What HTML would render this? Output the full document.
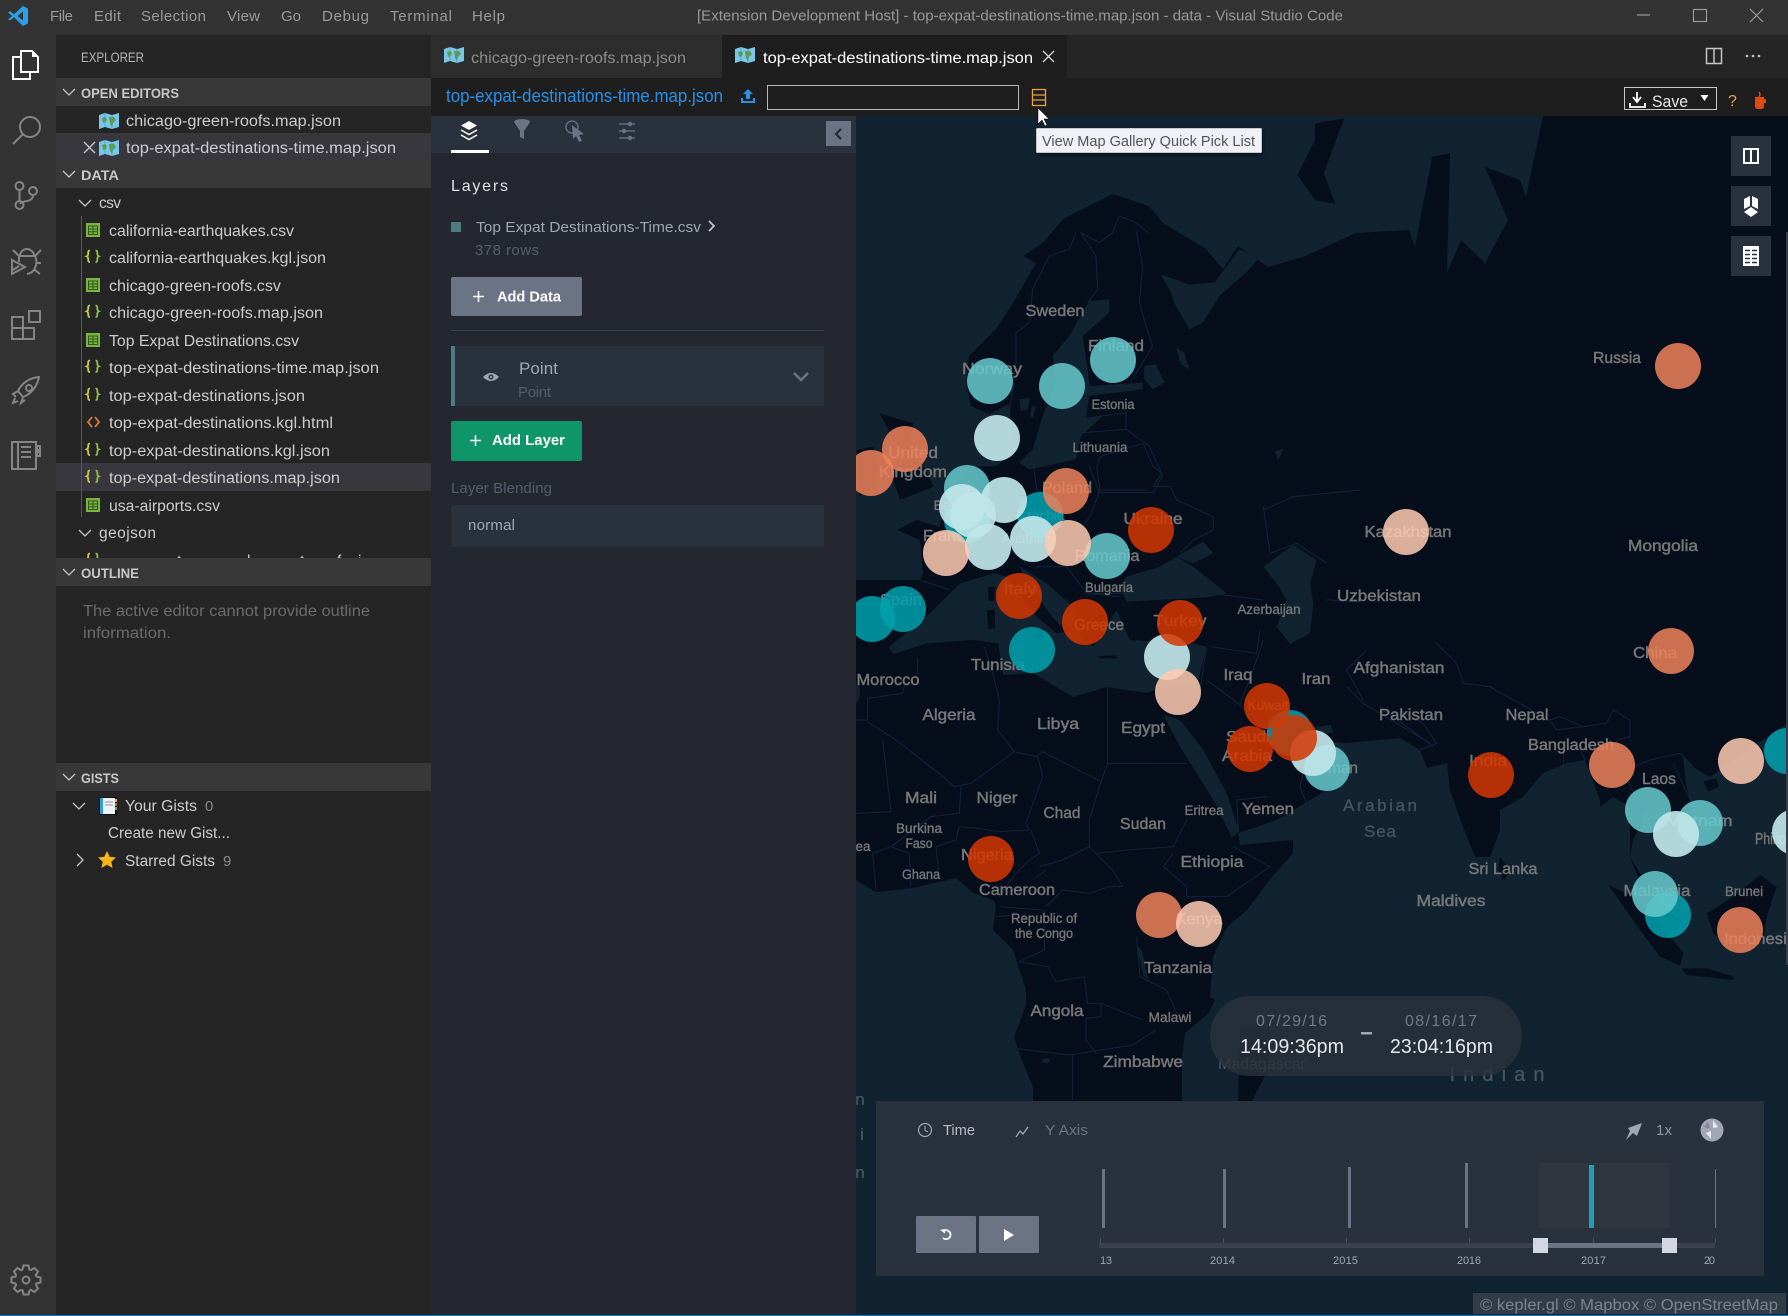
<!DOCTYPE html>
<html lang="en"><head><meta charset="utf-8"><title>top-expat-destinations-time.map.json - data - Visual Studio Code</title>
<style>
html,body{margin:0;padding:0;background:#252526;width:1788px;height:1316px;overflow:hidden}
svg{display:block}
text{font-family:"Liberation Sans",sans-serif;white-space:pre}
.r{font-size:15.5px;fill:#cccccc}
.h{font-size:14px;font-weight:700;fill:#c8c8c8}
.m{font-size:15px;fill:#9b9b9b}
.l{font-size:16px;fill:#777;text-anchor:middle;stroke:#777;stroke-width:.45}
.s{font-size:13.5px;fill:#777;text-anchor:middle;stroke:#777;stroke-width:.35}
.w{font-size:17px;fill:#47555f;text-anchor:middle;stroke:#47555f;stroke-width:.3}
.t{font-size:11px;fill:#a0a7b4}
.land{fill:#060e1c}.sea{fill:#112230}
.bd{fill:none;stroke:#13233c;stroke-width:3}
.ic{fill:none;stroke:#858585;stroke-width:2}
</style></head><body>
<svg width="1788" height="1316" viewBox="0 0 1788 1316" xmlns="http://www.w3.org/2000/svg">
<defs>
<clipPath id="mapc"><rect x="856" y="116" width="932" height="1200"/></clipPath>
<filter id="sh" x="-5%" y="-20%" width="110%" height="150%"><feDropShadow dx="1" dy="2" stdDeviation="1.500" flood-color="#000" flood-opacity=".5"/></filter>
<g id="mapi"><path d="M0 2l6-2 7 2 7-2v14l-7 2-7-2-6 2z" fill="#79c6e8"/><path d="M3 5l3-1 2 2-1 3-3 1zM10 4l5 0 2 3-3 3-1 4-2-3z" fill="#5b9e4b"/><path d="M6 0v14M13 2v14" stroke="#4d8fb3" stroke-width=".6"/></g>
<g id="csv"><rect width="14" height="14" fill="#7cb342"/><path d="M2.500 3h9v8.500h-9zM2.500 6h9M2.500 8.700h9M7 3v8.500" fill="none" stroke="#2c5a1a" stroke-width="1"/></g>
<g id="js"><path d="M4 1.500C2 1.500 2.200 3 2.200 4.500S2 6.800.7 7.300C2 7.800 2.200 8.500 2.200 10S2 13 4 13" fill="none" stroke="#cbcb41" stroke-width="1.800"/><path d="M9.500 1.500C11.500 1.500 11.300 3 11.300 4.500S11.500 6.800 12.800 7.300C11.500 7.800 11.300 8.500 11.300 10S11.500 13 9.500 13" fill="none" stroke="#8dc149" stroke-width="1.800"/></g>
<path id="chev" d="M-6-3L0 3 6-3" fill="none" stroke="#c5c5c5" stroke-width="1.300"/>
<path id="tooth" d="M22.500 1269.700L23.500 1265.500H28.500L29.500 1269.700L30.800 1270.240" fill="none" stroke="#858585" stroke-width="2"/>
</defs>

<!-- MAP -->
<g clip-path="url(#mapc)">
<rect x="856" y="116" width="932" height="1200" class="sea"/>
<!-- Eurasia + Africa -->
<polygon class="land" points="1113,194 1149,206 1163,223 1206,249 1223,269 1238,246 1268,267 1303,257 1356,233 1409,230 1415,247 1432,157 1450,153 1447,273 1461,240 1485,263 1508,220 1485,167 1520,180 1526,197 1543,116 1788,116 1788,723 1740,755 1710,777 1693,767 1683,757 1686,785 1693,813 1687,830 1670,840 1653,833 1647,810 1640,827 1633,840 1630,857 1640,873 1660,900 1677,920 1664,915 1640,880 1630,858 1630,807 1613,797 1600,807 1600,800 1585,760 1567,763 1543,773 1523,797 1500,810 1500,830 1490,857 1475,857 1463,827 1450,790 1447,763 1427,768 1420,750 1400,738 1346,743 1333,742 1300,725 1320,762 1353,763 1327,790 1305,803 1283,817 1257,827 1238,833 1240,845 1293,840 1293,853 1267,883 1247,910 1227,927 1213,957 1210,997 1215,1000 1209,1013 1185,1033 1182,1057 1182,1105 1033,1105 1033,1087 1023,1063 1014,1037 1026,1005 1026,990 1013,950 993,930 996,905 993,900 973,893 956,878 913,888 876,892 856,880 856,580 860,580 920,580 923,573 920,540 897,530 917,520 940,527 943,500 970,467 996,466 1019,449 1009,426 1011,403 989,414 971,406 966,383 969,356 996,329 1013,303 1036,263 1023,256 1043,243 1063,219 1089,206"/>
<!-- crop1 frame: Scandinavia -->
<g transform="translate(856,116) scale(.33333)">
<polygon class="sea" points="760,550 700,555 640,660 590,720 600,800 560,900 530,1000 490,1040 520,1060 660,1030 675,960 740,900 690,905 700,840 860,820 860,800 700,810 695,760 680,660 760,590"/>
<polygon class="sea" points="915,475 1000,505 1075,500 1150,400 1210,425 1170,470 1090,540 1040,620 1000,640 960,570 940,520"/>
<polygon class="sea" points="865,750 900,745 925,800 890,820 865,790"/>
<polygon class="sea" points="960,695 985,710 1000,760 975,745"/>
<polygon class="sea" points="490,850 522,845 515,880 495,885"/><polygon class="sea" points="528,870 540,872 530,905 522,900"/>
<path class="bd" d="M660 350L640 400 580 420 530 520 520 620 480 650 480 740 465 860M675 350L720 420 725 520 695 560M675 350L730 380 770 350 790 300 840 320 875 350M840 340L860 450 850 560 870 630 890 690 830 790M700 905L810 890 810 940 880 990 920 1080 890 1130 730 1130 700 1050M680 950L810 940"/>
</g>
<!-- zoom6 frame seas -->
<g transform="translate(860,300) scale(.33333)">
<polygon class="land" points="60,340 160,370 145,440 190,500 222,560 120,600 100,540 130,480"/>
<polygon class="land" points="-10,450 40,440 60,540 0,590"/>
<polygon class="sea" points="85,1042 200,950 270,880 300,850 400,820 440,830 530,950 590,1000 620,995 585,960 500,850 480,800 560,850 640,920 660,1010 700,1040 770,930 810,1020 1000,1030 1040,1040 1010,1160 909,1161 861,1179 741,1161 639,1191 519,1119 430,1125 415,1030 340,1020 200,1030 100,1062"/>
<polygon class="land" points="385,860 405,860 402,905 385,900"/><polygon class="land" points="380,930 405,930 405,985 385,985"/><polygon class="land" points="495,985 555,985 545,1025 510,1005"/><polygon class="land" points="715,1068 770,1066 770,1075 720,1076"/>
<polygon class="sea" points="800,830 900,800 950,770 1000,800 1050,840 1100,880 1040,892 800,905 780,860"/>
<polygon class="sea" points="950,770 1030,725 1060,760 1000,790"/>
<polygon class="sea" points="1210,800 1300,735 1370,780 1350,850 1360,910 1350,1000 1290,1032 1250,980 1280,900 1250,850"/>
<polygon class="sea" points="1245,455 1272,445 1255,480"/>
<path class="bd" d="M720 470L850 430 880 500 905 520 880 560 930 560 950 600 1060 650 1060 690 1000 720 960 760M720 570L860 570M720 470L710 500 720 570 690 650 640 720M520 490L530 570 650 620M480 600L530 575M180 840L270 870M350 680L420 720 500 790M530 800L620 800 680 880 780 890M800 880L680 880M1210 620L1230 760 1310 730 1400 790M1500 570L1300 590 1210 630M1400 900L1500 905M1050 880L1130 890 1210 900M1050 1040L1190 1060 1200 990M1040 1040L1020 1170"/>
</g>
<!-- crop2 frame: West Africa -->
<g transform="translate(856,640) scale(.33333)">
<polygon class="sea" points="-5,130 12,140 10,175 -5,200"/>
<ellipse cx="570" cy="1262" rx="12" ry="7" class="sea"/>
<path class="bd" d="M35 245L120 300 255 405 295 440 345 430 475 335 540 350 560 335 735 425M735 425L755 370 900 370M755 370L755 135M475 335L425 270 430 180 410 100 385 20M35 245L35 175 140 160 145 140 185 100 185 55M0 240L35 240M80 300L105 515 0 520M315 440L310 520 225 530 105 620 50 640 60 750M510 550L560 410 545 350M510 550L520 570 430 575 370 565 310 560 300 600 240 620 250 715M105 620L160 640 165 740M525 570L550 640 520 660 480 700 430 770M700 620L700 540 735 425M550 680L620 660 700 620 770 690 800 740 760 740 700 760 620 750 570 800M530 720L570 690M430 800L560 810M420 830L480 825M490 965L575 980 600 1025 685 1010 695 1090 735 1090 860 1140M690 1135L735 1130 735 1090M690 1135L690 1200 720 1240M475 1225L640 1245 830 1215 900 1170M650 1245L650 1380M565 810L565 930 490 965"/>
</g>
<!-- zoom7 -->
<g transform="translate(1000,640) scale(.33333)">
<polygon class="sea" points="490,225 540,240 610,330 680,460 718,575 695,592 640,480 590,400 540,320"/>
<polygon class="sea" points="780,170 870,230 940,262 992,255 1000,278 940,282 860,292 805,262"/>
<polygon class="sea" points="410,920 425,930 445,1020 430,1005"/>
<path class="bd" d="M322 370L560 370M520 640L490 680 560 740 560 770 680 770 810 680 700 620M560 540L520 620 380 630 290 640M410 890L420 1010 500 1050 530 1120M620 120L720 195 800 270M720 195L770 60 790 0M940 280L900 440 920 490M800 470L710 480 715 570M1090 180L1040 90 1100 30M1140 200L1300 320M1040 140L1090 190 1290 310"/>
</g>
<!-- zoom8 -->
<g transform="translate(1400,640) scale(.33333)">
<polygon class="land" points="625,735 700,770 780,850 850,940 840,978 780,950 720,870"/>
<polygon class="land" points="920,820 1000,770 1080,705 1130,740 1100,830 1090,900 1000,935 940,880"/>
<polygon class="land" points="845,985 920,985 1000,1010 1000,1020 860,1005"/>
<polygon class="land" points="300,650 330,690 312,722 295,690"/>
<polygon class="land" points="910,425 950,415 955,440 925,455"/>
<path class="bd" d="M110 10L170 70 190 130 270 140 330 175 450 240 480 230 550 260 620 250 640 210 690 240 690 290 650 300 660 370 700 380 750 360 840 340 880 380M0 210L70 250 110 310 60 330M450 240L470 270 550 260M490 320L490 380M540 330L555 360M660 370L720 500M820 370L870 480 900 500"/>
</g>
<!-- Arctic islands -->
<g transform="translate(870,0) scale(.5855,.33333)">
<polygon class="land" points="760,370 810,355 775,520 795,612 760,600 730,525 760,420"/>
<polygon class="sea" points="690,690 705,690 708,720 692,730"/>
</g>
<polygon class="land" points="1240,1027 1272,1030 1268,1070 1250,1105 1238,1105"/>

<!-- labels -->
<g>
<text class="l" x="1055" y="316" textLength="59" lengthAdjust="spacingAndGlyphs">Sweden</text>
<text class="l" x="1116" y="351" textLength="56" lengthAdjust="spacingAndGlyphs">Finland</text>
<text class="l" x="992" y="374" textLength="60" lengthAdjust="spacingAndGlyphs">Norway</text>
<text class="s" x="1113" y="409" textLength="43" lengthAdjust="spacingAndGlyphs">Estonia</text>
<text class="s" x="1100" y="452" textLength="55" lengthAdjust="spacingAndGlyphs">Lithuania</text>
<text class="l" x="913" y="458" textLength="50" lengthAdjust="spacingAndGlyphs">United</text>
<text class="l" x="913" y="477" textLength="68" lengthAdjust="spacingAndGlyphs">Kingdom</text>
<text class="l" x="1067" y="493" textLength="50" lengthAdjust="spacingAndGlyphs">Poland</text>
<text class="s" x="958" y="510">Belgium</text>
<text class="l" x="1153" y="524" textLength="59" lengthAdjust="spacingAndGlyphs">Ukraine</text>
<text class="s" x="1040" y="520">Czechia</text>
<text class="s" x="1023" y="543">Austria</text>
<text class="l" x="948" y="541" textLength="50" lengthAdjust="spacingAndGlyphs">France</text>
<text class="l" x="1107" y="561" textLength="65" lengthAdjust="spacingAndGlyphs">Romania</text>
<text class="s" x="1109" y="592" textLength="48" lengthAdjust="spacingAndGlyphs">Bulgaria</text>
<text class="l" x="1020" y="594" textLength="33" lengthAdjust="spacingAndGlyphs">Italy</text>
<text class="l" x="901" y="605" textLength="42" lengthAdjust="spacingAndGlyphs">Spain</text>
<text class="l" x="1099" y="630" textLength="50" lengthAdjust="spacingAndGlyphs">Greece</text>
<text class="l" x="1180" y="626" textLength="53" lengthAdjust="spacingAndGlyphs">Turkey</text>
<text class="s" x="1269" y="614" textLength="63" lengthAdjust="spacingAndGlyphs">Azerbaijan</text>
<text class="l" x="1379" y="601" textLength="84" lengthAdjust="spacingAndGlyphs">Uzbekistan</text>
<text class="l" x="1408" y="537" textLength="87" lengthAdjust="spacingAndGlyphs">Kazakhstan</text>
<text class="l" x="1617" y="363" textLength="48" lengthAdjust="spacingAndGlyphs">Russia</text>
<text class="l" x="1663" y="551" textLength="70" lengthAdjust="spacingAndGlyphs">Mongolia</text>
<text class="l" x="1655" y="658" textLength="44" lengthAdjust="spacingAndGlyphs">China</text>
<text class="l" x="998" y="670" textLength="54" lengthAdjust="spacingAndGlyphs">Tunisia</text>
<text class="l" x="888" y="685" textLength="63" lengthAdjust="spacingAndGlyphs">Morocco</text>
<text class="l" x="1238" y="680" textLength="29" lengthAdjust="spacingAndGlyphs">Iraq</text>
<text class="l" x="1316" y="684" textLength="29" lengthAdjust="spacingAndGlyphs">Iran</text>
<text class="l" x="1399" y="673" textLength="91" lengthAdjust="spacingAndGlyphs">Afghanistan</text>
<text class="l" x="1411" y="720" textLength="64" lengthAdjust="spacingAndGlyphs">Pakistan</text>
<text class="l" x="1527" y="720" textLength="43" lengthAdjust="spacingAndGlyphs">Nepal</text>
<text class="l" x="1571" y="750" textLength="86" lengthAdjust="spacingAndGlyphs">Bangladesh</text>
<text class="l" x="1659" y="784" textLength="34" lengthAdjust="spacingAndGlyphs">Laos</text>
<text class="l" x="1700" y="826" textLength="65" lengthAdjust="spacingAndGlyphs">Vietnam</text>
<text class="l" x="1785" y="844" textLength="60" lengthAdjust="spacingAndGlyphs">Philippines</text>
<text class="l" x="1657" y="896" textLength="67" lengthAdjust="spacingAndGlyphs">Malaysia</text>
<text class="s" x="1744" y="896" textLength="38" lengthAdjust="spacingAndGlyphs">Brunei</text>
<text class="l" x="1760" y="944" textLength="72" lengthAdjust="spacingAndGlyphs">Indonesia</text>
<text class="l" x="1503" y="874" textLength="69" lengthAdjust="spacingAndGlyphs">Sri Lanka</text>
<text class="l" x="1451" y="906" textLength="69" lengthAdjust="spacingAndGlyphs">Maldives</text>
<text class="l" x="1488" y="766" textLength="38" lengthAdjust="spacingAndGlyphs">India</text>
<text class="l" x="1058" y="729" textLength="42" lengthAdjust="spacingAndGlyphs">Libya</text>
<text class="l" x="1143" y="733" textLength="44" lengthAdjust="spacingAndGlyphs">Egypt</text>
<text class="l" x="949" y="720" textLength="53" lengthAdjust="spacingAndGlyphs">Algeria</text>
<text class="l" x="1248" y="742" textLength="44" lengthAdjust="spacingAndGlyphs">Saudi</text>
<text class="l" x="1247" y="761" textLength="50" lengthAdjust="spacingAndGlyphs">Arabia</text>
<text class="s" x="1268" y="710" textLength="41" lengthAdjust="spacingAndGlyphs">Kuwait</text>
<text class="l" x="1337" y="773" textLength="42" lengthAdjust="spacingAndGlyphs">Oman</text>
<text class="l" x="1268" y="814" textLength="52" lengthAdjust="spacingAndGlyphs">Yemen</text>
<text class="s" x="1204" y="815" textLength="39" lengthAdjust="spacingAndGlyphs">Eritrea</text>
<text class="l" x="1143" y="829" textLength="46" lengthAdjust="spacingAndGlyphs">Sudan</text>
<text class="l" x="1062" y="818" textLength="37" lengthAdjust="spacingAndGlyphs">Chad</text>
<text class="l" x="997" y="803" textLength="41" lengthAdjust="spacingAndGlyphs">Niger</text>
<text class="l" x="921" y="803" textLength="32" lengthAdjust="spacingAndGlyphs">Mali</text>
<text class="s" x="919" y="833" textLength="46" lengthAdjust="spacingAndGlyphs">Burkina</text>
<text class="s" x="919" y="848" textLength="27" lengthAdjust="spacingAndGlyphs">Faso</text>
<text class="s" x="921" y="879" textLength="38" lengthAdjust="spacingAndGlyphs">Ghana</text>
<text class="s" x="863" y="851">ea</text>
<text class="l" x="987" y="860" textLength="52" lengthAdjust="spacingAndGlyphs">Nigeria</text>
<text class="l" x="1017" y="895" textLength="76" lengthAdjust="spacingAndGlyphs">Cameroon</text>
<text class="s" x="1044" y="923" textLength="66" lengthAdjust="spacingAndGlyphs">Republic of</text>
<text class="s" x="1044" y="938" textLength="58" lengthAdjust="spacingAndGlyphs">the Congo</text>
<text class="l" x="1212" y="867" textLength="63" lengthAdjust="spacingAndGlyphs">Ethiopia</text>
<text class="l" x="1199" y="924" textLength="47" lengthAdjust="spacingAndGlyphs">Kenya</text>
<text class="l" x="1178" y="973" textLength="68" lengthAdjust="spacingAndGlyphs">Tanzania</text>
<text class="l" x="1057" y="1016" textLength="53" lengthAdjust="spacingAndGlyphs">Angola</text>
<text class="s" x="1170" y="1022" textLength="43" lengthAdjust="spacingAndGlyphs">Malawi</text>
<text class="l" x="1143" y="1067" textLength="80" lengthAdjust="spacingAndGlyphs">Zimbabwe</text>
<text class="l" x="1262" y="1069" textLength="88" lengthAdjust="spacingAndGlyphs" style="fill:#53585c;stroke:none">Madagascar</text>
<text class="w" x="1380" y="811" textLength="74">Arabian</text>
<text class="w" x="1380" y="837" textLength="32">Sea</text>
<text class="w" x="1497" y="1081" textLength="95" style="font-size:20px">Indian</text>
<text class="w" x="860" y="1105">n</text><text class="w" x="862" y="1140">i</text><text class="w" x="860" y="1178">n</text>
</g>

<!-- circles -->
<g fill-opacity=".85">
<g fill="#00a1ae">
<circle cx="1040" cy="515" r="23"/><circle cx="967" cy="520" r="23"/><circle cx="903" cy="609" r="23"/><circle cx="872" cy="619" r="23"/><circle cx="1032" cy="650" r="23"/><circle cx="1290" cy="733" r="23"/><circle cx="1787" cy="751" r="23"/><circle cx="1668" cy="915" r="23"/>
</g>
<g fill="#66cace">
<circle cx="990" cy="381" r="23"/><circle cx="1062" cy="386" r="23"/><circle cx="1113" cy="360" r="23"/><circle cx="1107" cy="556" r="23"/><circle cx="967" cy="488" r="23"/><circle cx="1327" cy="768" r="23"/><circle cx="1648" cy="810" r="23"/><circle cx="1700" cy="823" r="23"/><circle cx="1655" cy="894" r="23"/>
</g>
<g fill="#bfe5e8" fill-opacity=".92">
<circle cx="997" cy="438" r="23"/><circle cx="973" cy="515" r="23"/><circle cx="962" cy="507" r="23"/><circle cx="1004" cy="500" r="23"/><circle cx="988" cy="547" r="23"/><circle cx="1033" cy="539" r="23"/><circle cx="1167" cy="657" r="23"/><circle cx="1313" cy="753" r="23"/><circle cx="1676" cy="834" r="23"/><circle cx="1795" cy="832" r="23"/>
</g>
<g fill="#ee815b">
<circle cx="905" cy="449" r="23"/><circle cx="871" cy="473" r="23"/><circle cx="1066" cy="491" r="23"/><circle cx="1159" cy="915" r="23"/><circle cx="1612" cy="765" r="23"/><circle cx="1671" cy="651" r="23"/><circle cx="1740" cy="930" r="23"/><circle cx="1678" cy="366" r="23"/>
</g>
<g fill="#ffcab1">
<circle cx="946" cy="553" r="23"/><circle cx="1068" cy="543" r="23"/><circle cx="1178" cy="692" r="23"/><circle cx="1199" cy="924" r="23"/><circle cx="1741" cy="761" r="23"/><circle cx="1406" cy="532" r="23"/>
</g>
<g fill="#d53601">
<circle cx="1151" cy="530" r="23"/><circle cx="1019" cy="596" r="23"/><circle cx="1085" cy="622" r="23"/><circle cx="1180" cy="623" r="23"/><circle cx="1267" cy="706" r="23"/><circle cx="1250" cy="749" r="23"/><circle cx="1294" cy="738" r="23"/><circle cx="1491" cy="775" r="23"/><circle cx="991" cy="859" r="23"/>
</g>
</g>

<!-- map buttons -->
<g fill="#29323c"><rect x="1731" y="136" width="40" height="40"/><rect x="1731" y="186" width="40" height="40"/><rect x="1731" y="236" width="40" height="40"/></g>
<path d="M1744 149h14v14h-14zM1751 149v14" fill="none" stroke="#fff" stroke-width="2"/>
<path d="M1744 199l6-3v10l-6 3zM1758 199l-6-3v10l6 3zM1751 207l7 5-7 5-7-5z" fill="#fff"/>
<path d="M1743 246h16v20h-16z" fill="#fff"/><path d="M1745 250.500h5M1752 250.500h5M1745 254.500h5M1752 254.500h5M1745 258.500h5M1752 258.500h5M1745 262.500h5M1752 262.500h5" stroke="#29323c" stroke-width="1.500"/>

<!-- time tooltip -->
<rect x="1210" y="996" width="312" height="80" rx="40" fill="#29323c" fill-opacity=".82"/>
<text x="1256" y="1026" font-size="16" fill="#6e7a8a" textLength="71">07/29/16</text>
<text x="1405" y="1026" font-size="16" fill="#6e7a8a" textLength="72">08/16/17</text>
<text x="1240" y="1053" font-size="20" fill="#e4e7ec" textLength="104" lengthAdjust="spacingAndGlyphs">14:09:36pm</text>
<text x="1390" y="1053" font-size="20" fill="#e4e7ec" textLength="103" lengthAdjust="spacingAndGlyphs">23:04:16pm</text>
<rect x="1361" y="1032" width="11" height="2.500" fill="#a0a7b4"/>

<!-- time panel -->
<rect x="876" y="1101" width="888" height="175" fill="#29323c"/>
<circle cx="925" cy="1130" r="6.500" fill="none" stroke="#a0a7b4" stroke-width="1.200"/><path d="M925 1126v4.500l3 1.500" fill="none" stroke="#a0a7b4"/>
<text x="943" y="1135" font-size="15" fill="#b8bdc7" textLength="32" lengthAdjust="spacingAndGlyphs">Time</text>
<path d="M1016 1137l4-6 3 3 5-7" fill="none" stroke="#a0a7b4" stroke-width="1.300"/>
<text x="1045" y="1135" font-size="15" fill="#6a7485" textLength="43" lengthAdjust="spacingAndGlyphs">Y Axis</text>
<path d="M1642 1123l-5 13-4-3-7 7 4-9-2-3z" fill="#a0a7b4"/>
<text x="1656" y="1135" font-size="15" fill="#8d96a2" textLength="16">1x</text>
<circle cx="1712" cy="1130" r="11.500" fill="#a0a7b4"/><path d="M1713 1120l5 7-5 1zM1711 1131l-5 2 5 6z" fill="#e8eaee"/><path d="M1704 1127l6 2-2-7z" fill="#7f8794"/>
<rect x="1539" y="1163" width="131" height="65" fill="#2f3640"/>
<g fill="#6a7485"><rect x="1102" y="1169" width="3" height="59"/><rect x="1223" y="1169" width="3" height="59"/><rect x="1348" y="1167" width="3" height="61"/><rect x="1465" y="1163" width="3" height="65"/><rect x="1715" y="1169" width="1" height="59"/></g>
<rect x="1589" y="1165" width="5" height="63" fill="#1f9fb8"/>
<rect x="1099" y="1243" width="616" height="5" fill="#3a414c"/>
<g fill="#4a5260"><rect x="1100" y="1238" width="1" height="5"/><rect x="1223" y="1238" width="1" height="5"/><rect x="1346" y="1238" width="1" height="5"/><rect x="1469" y="1238" width="1" height="5"/><rect x="1593" y="1238" width="1" height="5"/><rect x="1715" y="1238" width="1" height="5"/></g>
<rect x="1540" y="1243" width="130" height="5" fill="#6a7485"/>
<rect x="1533" y="1238" width="15" height="15" fill="#d3d8e0"/><rect x="1662" y="1238" width="15" height="15" fill="#d3d8e0"/>
<text class="t" x="1100" y="1264" textLength="12">13</text><text class="t" x="1210" y="1264" textLength="25">2014</text><text class="t" x="1333" y="1264" textLength="25">2015</text><text class="t" x="1457" y="1264" textLength="24">2016</text><text class="t" x="1581" y="1264" textLength="25">2017</text><text class="t" x="1704" y="1264" textLength="11">20</text>
<rect x="916" y="1216" width="60" height="37" rx="1" fill="#6a7485"/><rect x="979" y="1216" width="60" height="37" rx="1" fill="#6a7485"/>
<path d="M943.500 1231a4.500 4.500 0 1 1-.5 7" fill="none" stroke="#fff" stroke-width="1.800"/><path d="M940 1230l5-1 0 4.500z" fill="#fff"/>
<path d="M1004 1229l10 6-10 6z" fill="#fff"/>
<!-- attribution -->
<rect x="1473" y="1293" width="313" height="21" fill="#323c46"/>
<text x="1480" y="1310" font-size="16" fill="#7a838e" textLength="298" lengthAdjust="spacingAndGlyphs">© kepler.gl © Mapbox © OpenStreetMap</text>
<rect x="1786" y="232" width="2" height="733" fill="#3a3e42"/>
</g>

<!-- KEPLER SIDE PANEL -->
<rect x="431" y="116" width="425" height="1200" fill="#242730"/>
<rect x="431" y="116" width="425" height="37" fill="#29323c"/>
<rect x="451" y="150" width="38" height="3" fill="#fff"/>
<path d="M469 121l8 4.500-8 4.500-8-4.500z" fill="#fff"/><path d="M461 130l8 4.500 8-4.500M461 135l8 4.500 8-4.500" fill="none" stroke="#fff" stroke-width="1.500"/>
<path d="M514 122a8 3 0 0 1 16 0l-6 9v8l-4-2v-6z" fill="#6a7485"/>
<circle cx="572" cy="127" r="6" fill="none" stroke="#6a7485" stroke-width="1.300"/><path d="M572 125l12 9-5 1 3 6-3 1-3-6-3 3z" fill="#6a7485"/>
<path d="M619 124h16M619 131h16M619 138h16" stroke="#6a7485" stroke-width="1.300"/><circle cx="630" cy="124" r="2.200" fill="#6a7485"/><circle cx="624" cy="131" r="2.200" fill="#6a7485"/><circle cx="630" cy="138" r="2.200" fill="#6a7485"/>
<rect x="826" y="121" width="25" height="25" fill="#6a7485"/><path d="M841 129l-5 5 5 5" fill="none" stroke="#242730" stroke-width="2"/>
<text x="451" y="191" font-size="16" fill="#dfe2e8" textLength="57">Layers</text>
<rect x="451" y="222" width="10" height="10" fill="#4f7a80"/>
<text x="476" y="232" font-size="15" fill="#a0a7b4" textLength="225" lengthAdjust="spacingAndGlyphs">Top Expat Destinations-Time.csv</text>
<path d="M709 221l5 5-5 5" fill="none" stroke="#c0c4cc" stroke-width="1.800"/>
<text x="475" y="255" font-size="15" fill="#565d6a" textLength="64">378 rows</text>
<rect x="451" y="277" width="131" height="39" rx="2" fill="#6a7485"/>
<path d="M473 296.500h11M478.500 291v11" stroke="#fff" stroke-width="1.500"/>
<text x="497" y="301.500" font-size="15" font-weight="700" fill="#fff" textLength="64" lengthAdjust="spacingAndGlyphs">Add Data</text>
<rect x="451" y="330" width="373" height="1" fill="#3a414c"/>
<rect x="451" y="346" width="373" height="60" fill="#29323c"/><rect x="451" y="346" width="4" height="60" fill="#4f7a80"/>
<path d="M483 377q8-8 16 0q-8 8-16 0z" fill="#a0a7b4"/><circle cx="491" cy="377" r="2.500" fill="#29323c"/><circle cx="491" cy="377" r="1.100" fill="#a0a7b4"/>
<text x="519" y="374" font-size="17" fill="#a0a7b4" textLength="39">Point</text>
<text x="518" y="397" font-size="15" fill="#565d6a" textLength="33">Point</text>
<path d="M794 373l7 7 7-7" fill="none" stroke="#6a7485" stroke-width="2.500"/>
<rect x="451" y="421" width="131" height="40" rx="2" fill="#0f9668"/>
<path d="M470 440.500h11M475.500 435v11" stroke="#fff" stroke-width="1.500"/>
<text x="492" y="445" font-size="15" font-weight="700" fill="#fff" textLength="73" lengthAdjust="spacingAndGlyphs">Add Layer</text>
<text x="451" y="493" font-size="15" fill="#565d6a" textLength="101">Layer Blending</text>
<rect x="451" y="505" width="373" height="42" rx="2" fill="#29323c"/>
<text x="468" y="530" font-size="15" fill="#a0a7b4" textLength="47">normal</text>

<!-- TITLE BAR / TABS / TOOLBAR -->
<rect x="431" y="35" width="1357" height="43" fill="#252526"/>
<rect x="431" y="78" width="1357" height="38" fill="#1e1e1e"/>
<rect x="431" y="35" width="291" height="43" fill="#2d2d2d"/>
<rect x="722" y="35" width="345" height="43" fill="#1e1e1e"/>
<use href="#mapi" x="444" y="47"/><use href="#mapi" x="735" y="47"/>
<text x="471" y="63" class="r" style="fill:#8c8c8c" textLength="215" lengthAdjust="spacingAndGlyphs">chicago-green-roofs.map.json</text>
<text x="763" y="63" class="r" style="fill:#fff" textLength="270" lengthAdjust="spacingAndGlyphs">top-expat-destinations-time.map.json</text>
<path d="M1043 51l11 11M1054 51l-11 11" stroke="#d8d8d8" stroke-width="1.300"/>
<path d="M1706.500 48.500h15v15h-15zM1714 48.500v15" fill="none" stroke="#c5c5c5" stroke-width="1.500"/>
<g fill="#c5c5c5"><circle cx="1747" cy="56" r="1.300"/><circle cx="1753" cy="56" r="1.300"/><circle cx="1759" cy="56" r="1.300"/></g>
<text x="446" y="102" font-size="18" fill="#2a8fe8" textLength="277" lengthAdjust="spacingAndGlyphs">top-expat-destinations-time.map.json</text>
<path d="M748 89l-5 5h3v5h4v-5h3zM741 98v5h14v-5h-2v3h-10v-3z" fill="#2a8fe8"/>
<rect x="767.500" y="85.500" width="251" height="24" fill="none" stroke="#b8b8b8"/>
<path d="M1032.500 89.500h13v16h-13zM1032.500 95h13M1032.500 100h13" fill="none" stroke="#e8a33d" stroke-width="1.300"/>
<rect x="1624.500" y="87.500" width="92" height="22" fill="none" stroke="#c8c8c8"/>
<path d="M1637 92v9M1633 97l4 5 4-5M1630 103v4h15v-4" fill="none" stroke="#fff" stroke-width="1.800"/>
<text x="1652" y="107" font-size="17" fill="#e8e8e8" textLength="36" lengthAdjust="spacingAndGlyphs">Save</text>
<path d="M1700.500 95h8l-4 6z" fill="#fff"/>
<text x="1728" y="106" font-size="16" fill="#e8a33d">?</text>
<path d="M1755 97h9v9q0 3-3 3h-3q-3 0-3-3zM1764 99h2v4h-2" fill="#e04a10"/><path d="M1759 92q2 2 0 5" fill="none" stroke="#e04a10" stroke-width="1.500"/>
<!-- tooltip -->
<rect x="1036.500" y="128.500" width="225" height="24" rx="1" fill="#f0f0f7" stroke="#c8c8c8" filter="url(#sh)"/>
<text x="1042" y="146" font-size="14.500" fill="#555" textLength="213" lengthAdjust="spacingAndGlyphs">View Map Gallery Quick Pick List</text>
<path d="M1038 108v16l4-4 3 6 2-1-3-6h5z" fill="#fff" stroke="#000" stroke-width=".5"/>

<rect x="0" y="0" width="1788" height="35" fill="#333333"/>
<path d="M23 6l5 2.500v15l-5 2.500-9-8.800-3.800 3L8 19.500l4-3.500-4-3.500 2.200-1.200 3.800 3zM23 11.500l-5.500 4.500 5.500 4.500z" fill="#2b9fe8" fill-rule="evenodd"/>
<text class="m" x="50" y="21" textLength="23">File</text><text class="m" x="94" y="21" textLength="27">Edit</text><text class="m" x="141" y="21" textLength="65">Selection</text><text class="m" x="227" y="21" textLength="33">View</text><text class="m" x="281" y="21" textLength="20">Go</text><text class="m" x="322" y="21" textLength="47">Debug</text><text class="m" x="390" y="21" textLength="62">Terminal</text><text class="m" x="472" y="21" textLength="33">Help</text>
<text x="697" y="20.500" font-size="14.500" fill="#999" textLength="646" lengthAdjust="spacingAndGlyphs">[Extension Development Host] - top-expat-destinations-time.map.json - data - Visual Studio Code</text>
<path d="M1637 15h13" stroke="#999" stroke-width="1.200"/><rect x="1693.500" y="9.500" width="13" height="12" fill="none" stroke="#999" stroke-width="1.200"/><path d="M1750 9l13 13M1763 9l-13 13" stroke="#999" stroke-width="1.200"/>

<!-- ACTIVITY BAR -->
<rect x="0" y="35" width="56" height="1281" fill="#333333"/>
<path d="M21 57H13V79H30V72" fill="none" stroke="#fff" stroke-width="2"/><path d="M21 51v21h17V57l-6-6z" fill="none" stroke="#fff" stroke-width="2"/><path d="M32 51v6h6z" fill="#fff"/>
<circle cx="30" cy="127" r="10" class="ic"/><path d="M23 134l-10 10" class="ic"/>
<circle cx="19.500" cy="186" r="4" class="ic"/><circle cx="19.500" cy="205" r="4" class="ic"/><circle cx="33" cy="191" r="4" class="ic"/><path d="M19.500 190v11M33 195q0 5-6 6t-7 3" class="ic"/>
<path d="M20 256a7 7 0 0 1 14 0M19 256h16q3 6 0 12-2 5-8 6M19 262v-6M13 250l6 6M41 250l-6 6M13 270l6-4M36 263h5M35 270l5 4" class="ic"/><path d="M12 260l13 7-13 7z" class="ic"/>
<path d="M12 317h11v11H12zM23 328h11v11H23zM12 328h11v11H12z" class="ic"/><rect x="29" y="311" width="11" height="11" class="ic"/>
<path d="M39 377c-10 1-17 6-21 14l5 6c8-3 14-10 16-20zM18 391l-5 3 3 3M23 397l-2 6 4-3M15 398l-2 5 5-2" class="ic"/><circle cx="29" cy="388" r="3" class="ic"/>
<rect x="12" y="442" width="24" height="27" class="ic"/><path d="M18 442v27M21 447h10M21 452h10M21 457h10" class="ic"/><path d="M37 446h3v4h-3zM37 452h3v4h-3z" class="ic"/>
<circle cx="26" cy="1280" r="3.500" class="ic"/>
<use href="#tooth"/><use href="#tooth" transform="rotate(45 26 1280)"/><use href="#tooth" transform="rotate(90 26 1280)"/><use href="#tooth" transform="rotate(135 26 1280)"/><use href="#tooth" transform="rotate(180 26 1280)"/><use href="#tooth" transform="rotate(225 26 1280)"/><use href="#tooth" transform="rotate(270 26 1280)"/><use href="#tooth" transform="rotate(315 26 1280)"/>

<!-- SIDEBAR -->
<rect x="56" y="35" width="375" height="1281" fill="#252526"/>
<text x="81" y="62" font-size="14" fill="#b4b4b4" textLength="63" lengthAdjust="spacingAndGlyphs">EXPLORER</text>
<rect x="56" y="133" width="375" height="27" fill="#37373d"/>
<rect x="56" y="463" width="375" height="28" fill="#37373d"/>
<rect x="81" y="216" width="1" height="301" fill="#585858"/>
<use href="#mapi" x="99" y="113"/><use href="#mapi" x="99" y="140"/>
<text class="r" x="126" y="126" textLength="215" lengthAdjust="spacingAndGlyphs">chicago-green-roofs.map.json</text>
<text class="r" x="126" y="153" textLength="270" lengthAdjust="spacingAndGlyphs">top-expat-destinations-time.map.json</text>
<path d="M84 142l11 11M95 142l-11 11" stroke="#c8c8c8" stroke-width="1.300"/>
<use href="#chev" x="85" y="203"/><text class="r" x="99" y="208" textLength="22">csv</text>
<use href="#csv" x="86" y="223"/><text class="r" x="109" y="236" textLength="185" lengthAdjust="spacingAndGlyphs">california-earthquakes.csv</text>
<use href="#js" x="86" y="249"/><text class="r" x="109" y="263" textLength="217" lengthAdjust="spacingAndGlyphs">california-earthquakes.kgl.json</text>
<use href="#csv" x="86" y="278"/><text class="r" x="109" y="291" textLength="172" lengthAdjust="spacingAndGlyphs">chicago-green-roofs.csv</text>
<use href="#js" x="86" y="304"/><text class="r" x="109" y="318" textLength="214" lengthAdjust="spacingAndGlyphs">chicago-green-roofs.map.json</text>
<use href="#csv" x="86" y="333"/><text class="r" x="109" y="346" textLength="190" lengthAdjust="spacingAndGlyphs">Top Expat Destinations.csv</text>
<use href="#js" x="86" y="359"/><text class="r" x="109" y="373" textLength="270" lengthAdjust="spacingAndGlyphs">top-expat-destinations-time.map.json</text>
<use href="#js" x="86" y="387"/><text class="r" x="109" y="401" textLength="196" lengthAdjust="spacingAndGlyphs">top-expat-destinations.json</text>
<path d="M92 417l-4 5 4 5M95 417l4 5-4 5" fill="none" stroke="#e37933" stroke-width="1.800"/><text class="r" x="109" y="428" textLength="224" lengthAdjust="spacingAndGlyphs">top-expat-destinations.kgl.html</text>
<use href="#js" x="86" y="442"/><text class="r" x="109" y="456" textLength="221" lengthAdjust="spacingAndGlyphs">top-expat-destinations.kgl.json</text>
<use href="#js" x="86" y="469"/><text class="r" x="109" y="483" textLength="231" lengthAdjust="spacingAndGlyphs">top-expat-destinations.map.json</text>
<use href="#csv" x="86" y="498"/><text class="r" x="109" y="511" textLength="111" lengthAdjust="spacingAndGlyphs">usa-airports.csv</text>
<use href="#chev" x="85" y="533"/><text class="r" x="99" y="538" textLength="57">geojson</text>
<use href="#js" x="86" y="552"/><text class="r" x="177 247 300 337 358" y="566">tltfi</text>

<rect x="56" y="78" width="375" height="28" fill="#383838"/>
<rect x="56" y="160" width="375" height="28" fill="#383838"/>
<rect x="56" y="558" width="375" height="28" fill="#383838"/>
<rect x="56" y="763" width="375" height="28" fill="#383838"/>
<use href="#chev" x="69" y="92"/><text class="h" x="81" y="98" textLength="98" lengthAdjust="spacingAndGlyphs">OPEN EDITORS</text>
<use href="#chev" x="69" y="174"/><text class="h" x="81" y="180" textLength="38" lengthAdjust="spacingAndGlyphs">DATA</text>
<use href="#chev" x="69" y="572"/><text class="h" x="81" y="578" textLength="58" lengthAdjust="spacingAndGlyphs">OUTLINE</text>
<use href="#chev" x="69" y="777"/><text class="h" x="81" y="783" textLength="38" lengthAdjust="spacingAndGlyphs">GISTS</text>
<text x="83" y="616" font-size="15.500" fill="#6b6b6b" textLength="287" lengthAdjust="spacingAndGlyphs">The active editor cannot provide outline</text>
<text x="83" y="638" font-size="15.500" fill="#6b6b6b" textLength="88" lengthAdjust="spacingAndGlyphs">information.</text>
<use href="#chev" x="79" y="806"/>
<rect x="99" y="797" width="18" height="18" fill="#111"/><rect x="103" y="798" width="12" height="16" fill="#eef2f5"/><rect x="100" y="798" width="3" height="16" fill="#29a3d9"/><path d="M105 802h8M105 805h8" stroke="#8a99a6"/><rect x="115" y="799" width="2" height="3" fill="#e8b23a"/><rect x="115" y="803" width="2" height="3" fill="#d9534f"/><rect x="115" y="807" width="2" height="3" fill="#5cb85c"/>
<text class="r" x="125" y="811" textLength="72" lengthAdjust="spacingAndGlyphs">Your Gists</text><text x="205" y="811" font-size="15" fill="#8a8a8a">0</text>
<text class="r" x="108" y="838" textLength="122" lengthAdjust="spacingAndGlyphs">Create new Gist...</text>
<path d="M77 854l6 6-6 6" fill="none" stroke="#c5c5c5" stroke-width="1.300"/>
<path d="M107 851l2.700 5.800 6.300.7-4.700 4.300 1.300 6.200-5.600-3.200-5.600 3.200 1.300-6.200-4.700-4.300 6.300-.7z" fill="#f4b41a"/>
<text class="r" x="125" y="866" textLength="90" lengthAdjust="spacingAndGlyphs">Starred Gists</text><text x="223" y="866" font-size="15" fill="#8a8a8a">9</text>
<rect x="0" y="1315" width="1788" height="1" fill="#007acc"/>
</svg>
</body></html>
